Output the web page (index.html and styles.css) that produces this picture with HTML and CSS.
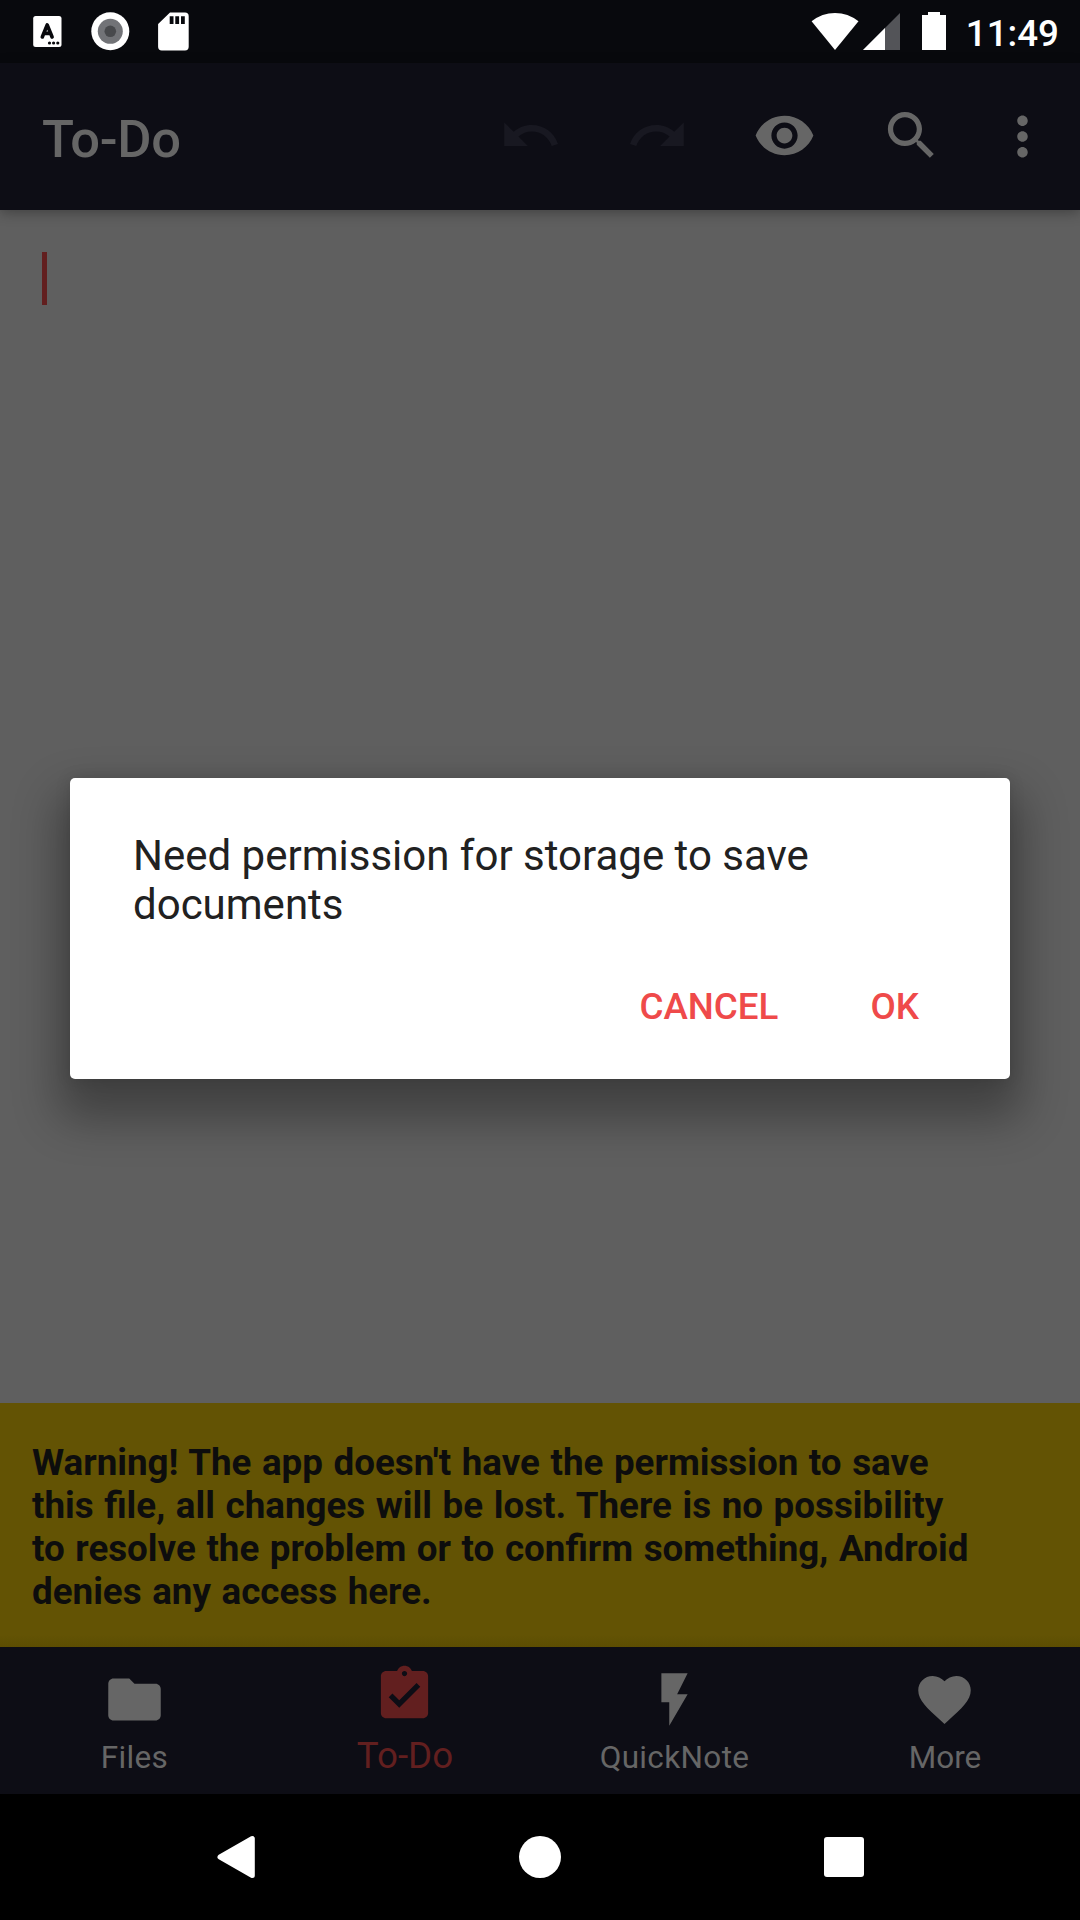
FILE: index.html
```html
<!DOCTYPE html>
<html lang="en">
<head>
<meta charset="utf-8">
<title>To-Do</title>
<link rel="stylesheet" href="styles.css">
</head>
<body>
<div class="screen">
  <header class="status">
    <svg class="status-left" width="200" height="63" viewBox="0 0 200 63">
      <rect x="33.2" y="16" width="28.3" height="31" rx="2.5" fill="#fff"/>
      <path d="M42.3 37 47.2 24.8 52.1 37M44 33.4H50.4" fill="none" stroke="#08090d" stroke-width="3.6" stroke-linecap="round" stroke-linejoin="round"/>
      <g fill="#08090d"><circle cx="49.5" cy="43" r="1.6"/><circle cx="53.6" cy="43" r="1.6"/><circle cx="57.8" cy="43" r="1.6"/></g>
      <circle cx="110.3" cy="31.3" r="19" fill="#fff"/>
      <circle cx="110.3" cy="31.3" r="12.5" fill="#727377"/>
      <circle cx="110.3" cy="31.3" r="5.8" fill="#48494c"/>
      <path d="M170 12.5H185a3.7 3.7 0 0 1 3.7 3.7V46.8a3.7 3.7 0 0 1-3.7 3.7H161.8a3.7 3.7 0 0 1-3.7-3.7V24z" fill="#fff"/>
      <path d="M169.7 16.3h3.8v7.7h-3.8zM175.3 16.3h3.8v7.7h-3.8zM181 16.3h3.8v7.7H181z" fill="#08090d"/>
    </svg>
    <div class="status-right">
      <svg width="140" height="63" viewBox="810 0 140 63" fill="#fff">
        <path d="M811.6 21.3Q822 13 835 13t23.5 8.3L835 50z"/>
        <path d="M900 13V50H863z" fill="#535458"/>
        <path d="M885 28V50H863z"/>
        <path d="M928 12h12v3h6v35h-24V15h6z"/>
      </svg>
      <span class="clock">11:49</span>
    </div>
  </header>

  <nav class="appbar">
    <h1 class="title">To-Do</h1>
    <div class="actions">
      <svg class="icon disabled" viewBox="0 0 24 24"><path d="M12.5 8c-2.65 0-5.05.99-6.9 2.6L2 7v9h9l-3.62-3.62c1.39-1.16 3.16-1.88 5.12-1.88 3.54 0 6.55 2.31 7.6 5.5l2.37-.78C21.08 11.03 17.15 8 12.5 8z"/></svg>
      <svg class="icon disabled" viewBox="0 0 24 24"><path d="M18.4 10.6C16.55 8.99 14.15 8 11.5 8c-4.65 0-8.58 3.03-9.96 7.22L3.9 16c1.05-3.19 4.05-5.5 7.6-5.5 1.95 0 3.73.72 5.12 1.88L13 16h9V7l-3.6 3.6z"/></svg>
      <svg class="icon" viewBox="0 0 24 24"><path d="M12 4.5C7 4.5 2.73 7.61 1 12c1.73 4.39 6 7.5 11 7.5s9.27-3.11 11-7.5c-1.73-4.39-6-7.5-11-7.5zM12 17c-2.76 0-5-2.24-5-5s2.24-5 5-5 5 2.24 5 5-2.24 5-5 5zm0-8c-1.66 0-3 1.34-3 3s1.34 3 3 3 3-1.34 3-3-1.34-3-3-3z"/></svg>
      <svg class="icon" viewBox="0 0 24 24"><path d="M15.5 14h-.79l-.28-.27C15.41 12.59 16 11.11 16 9.5 16 5.91 13.09 3 9.5 3S3 5.91 3 9.5 5.91 16 9.5 16c1.61 0 3.09-.59 4.23-1.57l.27.28v.79l5 4.99L20.49 19l-4.99-5zm-6 0C7.01 14 5 11.99 5 9.5S7.01 5 9.5 5 14 7.01 14 9.5 11.99 14 9.5 14z"/></svg>
      <svg class="icon overflow" viewBox="0 0 24 24"><path d="M12 8c1.1 0 2-.9 2-2s-.9-2-2-2-2 .9-2 2 .9 2 2 2zm0 2c-1.1 0-2 .9-2 2s.9 2 2 2 2-.9 2-2-.9-2-2-2zm0 6c-1.1 0-2 .9-2 2s.9 2 2 2 2-.9 2-2-.9-2-2-2z"/></svg>
    </div>
  </nav>

  <main class="editor"><div class="caret"></div></main>

  <p class="warning">Warning! The app doesn't have the permission to save this file, all changes will be lost. There is no possibility to resolve the problem or to confirm something, Android denies any access here.</p>

  <nav class="tabs">
    <a class="tab"><svg class="icon" viewBox="0 0 24 24"><path d="M10 4H4c-1.1 0-1.99.9-1.99 2L2 18c0 1.1.9 2 2 2h16c1.1 0 2-.9 2-2V8c0-1.1-.9-2-2-2h-8l-2-2z"/></svg><span class="wide">Files</span></a>
    <a class="tab active"><svg class="icon" viewBox="0 0 24 24"><path d="M19 3h-4.18C14.4 1.84 13.3 1 12 1c-1.3 0-2.4.84-2.82 2H5c-1.1 0-2 .9-2 2v14c0 1.1.9 2 2 2h14c1.1 0 2-.9 2-2V5c0-1.1-.9-2-2-2zm-7 0c.55 0 1 .45 1 1s-.45 1-1 1-1-.45-1-1 .45-1 1-1zm-2 14l-4-4 1.41-1.41L10 14.17l6.59-6.59L18 9l-8 8z"/></svg><span>To-Do</span></a>
    <a class="tab"><svg class="icon" viewBox="0 0 24 24"><path d="M7 2v11h3v9l7-12h-4l4-8z"/></svg><span class="wide">QuickNote</span></a>
    <a class="tab"><svg class="icon" viewBox="0 0 24 24"><path d="M12 21.35l-1.45-1.32C5.4 15.36 2 12.28 2 8.5 2 5.42 4.42 3 7.5 3c1.74 0 3.41.81 4.5 2.09C13.09 3.81 14.76 3 16.5 3 19.58 3 22 5.42 22 8.5c0 3.78-3.4 6.86-8.55 11.54L12 21.35z"/></svg><span>More</span></a>
  </nav>

  <footer class="system-nav">
    <svg width="42" height="44" viewBox="0 0 42 44"><path d="M5 22 37.3 3.5V40.5z" fill="#fff" stroke="#fff" stroke-width="5" stroke-linejoin="round"/></svg>
    <svg width="42" height="42" viewBox="0 0 42 42"><circle cx="21" cy="21" r="21" fill="#fff"/></svg>
    <svg width="42" height="42" viewBox="0 0 42 42"><rect x="1" y="1" width="40" height="40" rx="3" fill="#fff"/></svg>
  </footer>

  <div class="dialog" role="dialog">
    <p class="message">Need permission for storage to save documents</p>
    <div class="buttons">
      <button class="btn">CANCEL</button>
      <button class="btn">OK</button>
    </div>
  </div>
</div>
</body>
</html>
```
FILE: styles.css
```css
* { box-sizing: border-box; margin: 0; padding: 0; }

body { font-family: Roboto, "Liberation Sans", sans-serif; background: #000; }

.screen {
  position: relative;
  display: flex;
  flex-direction: column;
  width: 1080px;
  height: 1920px;
  overflow: hidden;
}

.status {
  display: flex;
  justify-content: space-between;
  height: 63px;
  background: #08090d;
}
.status-right { display: flex; padding-right: 21px; }
.clock {
  width: 94px;
  margin-left: 15px;
  color: #fff;
  font-size: 36.75px;
  font-weight: 500;
  line-height: 67px;
  text-align: right;
  white-space: nowrap;
}

.icon { display: block; width: 63px; height: 63px; fill: #666; }

.appbar {
  position: relative;
  display: flex;
  align-items: center;
  justify-content: space-between;
  height: 147px;
  padding: 0 26px 0 42px;
  background: #0d0d15;
  box-shadow: 0 3px 12px rgba(0, 0, 0, .3);
}
.title { color: #666; font-size: 52.5px; font-weight: 500; line-height: 62px; padding-top: 4px; letter-spacing: -.25px; }
.actions { display: flex; gap: 64px; padding-bottom: 2px; }
.disabled { fill: #181821; }
.overflow { margin: 1px 0 -1px -16px; }

.editor { flex: 1; padding: 42px; background: #5f5f5f; }
.caret { width: 5px; height: 53px; background: #621f1f; }

.warning {
  height: 244px;
  padding: 38px 105px 0 32px;
  background: linear-gradient(#635304 95%, #5c4d02);
  color: #0d0d0d;
  font-size: 36.75px;
  font-weight: 700;
  line-height: 43px;
  word-spacing: 1.45px;
}

.tabs {
  display: grid;
  grid-template-columns: repeat(4, 1fr);
  height: 147px;
  background: #0d0d15;
}
.tab {
  display: flex;
  flex-direction: column;
  align-items: center;
  padding-top: 21px;
  color: #666;
  font-size: 31.5px;
  line-height: 37px;
}
.tab .icon { margin-right: 1px; }
.tab span { margin-top: 8px; }
.tab .wide { letter-spacing: .35px; margin-right: 1px; }
.tab.active { padding-top: 16px; color: #621f1f; font-size: 36.75px; line-height: 43px; }
.tab.active .icon { fill: #621f1f; }

.system-nav {
  display: flex;
  align-items: center;
  justify-content: space-between;
  height: 126px;
  padding: 0 215px;
  background: #000;
}

.dialog {
  position: absolute;
  top: 778px;
  left: 70px;
  width: 940px;
  height: 301px;
  padding: 53px 63px 0;
  border-radius: 5px;
  background: #fff;
  box-shadow: 0 28px 46px 12px rgba(0, 0, 0, .32), 0 0 16px rgba(0, 0, 0, .12);
}
.message { color: #212121; font-size: 42px; line-height: 49px; }
.buttons { display: flex; justify-content: flex-end; gap: 92px; margin-top: 56px; padding-right: 28px; }
.btn {
  border: 0;
  background: none;
  color: #ef4a4a;
  font: 500 36.75px/43px Roboto, "Liberation Sans", sans-serif;
}
```
